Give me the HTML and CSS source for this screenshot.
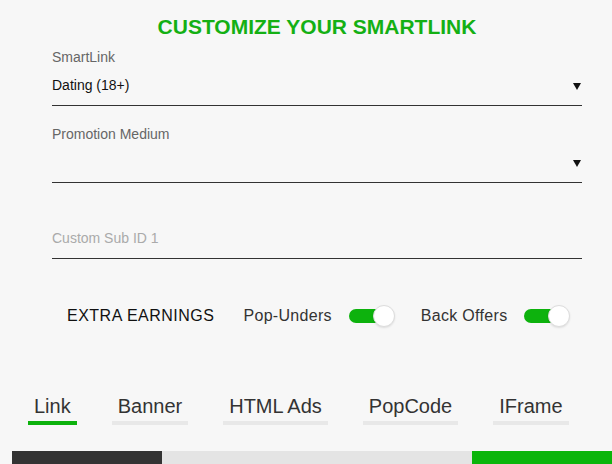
FILE: index.html
```html
<!DOCTYPE html>
<html lang="en">
<head>
	<title>Customize your SmartLink</title>
	<meta charset="utf-8">
	<meta name="viewport" content="initial-scale=1.0">
	<link rel="stylesheet" href="styles.css">
</head>
<body>

	<main class="smartlink">
		<h1 class="smartlink-title">CUSTOMIZE YOUR SMARTLINK</h1>

		<div class="field">
			<label class="field-label">SmartLink</label>
			<div class="select">
				<span class="select-value">Dating (18+)</span>
				<span class="select-arrow"></span>
			</div>
		</div>

		<div class="field">
			<label class="field-label">Promotion Medium</label>
			<div class="select">
				<span class="select-value"></span>
				<span class="select-arrow"></span>
			</div>
		</div>

		<div class="field field-sub">
			<input class="text-input" type="text" placeholder="Custom Sub ID 1">
		</div>

		<div class="extras">
			<span class="extras-title">EXTRA EARNINGS</span>
			<div class="extras-option">
				<span>Pop-Unders</span>
				<span class="toggle on"><span class="toggle-knob"></span></span>
			</div>
			<div class="extras-option">
				<span>Back Offers</span>
				<span class="toggle on"><span class="toggle-knob"></span></span>
			</div>
		</div>
	</main>

	<nav class="tabs">
		<a class="tab active">Link</a>
		<a class="tab">Banner</a>
		<a class="tab">HTML Ads</a>
		<a class="tab">PopCode</a>
		<a class="tab">IFrame</a>
	</nav>

	<div class="actions">
		<span class="action action-dark"></span>
		<span class="action action-light"></span>
		<span class="action action-green"></span>
	</div>

</body>
</html>
```

FILE: styles.css
```css
html, body {
	margin: 0;
	padding: 0;
	height: 100%;
	overflow: hidden;
	background: #f7f7f7;
	font-family: "Liberation Sans", Arial, sans-serif;
	color: #333;
}

* {
	box-sizing: border-box;
}

.smartlink {
	width: 530px;
	margin-left: 52px;
	padding-top: 15px;
}

.smartlink-title {
	margin: 0;
	font-size: 21px;
	line-height: 24px;
	font-weight: bold;
	text-align: center;
	color: #14b014;
}

.field {
	margin-top: 20px;
}

.field:first-of-type {
	margin-top: 10px;
}

.field-label {
	display: block;
	font-size: 14px;
	line-height: 16px;
	color: #666;
}

.select {
	display: flex;
	justify-content: space-between;
	align-items: center;
	height: 41px;
	padding: 10px 0;
	border-bottom: 1px solid #333;
	font-size: 14px;
	line-height: 20px;
	color: #111;
}

.select-arrow {
	width: 0;
	height: 0;
	margin: 3px 1px 0 0;
	border-left: 4px solid transparent;
	border-right: 4px solid transparent;
	border-top: 7px solid #111;
}

.field-sub {
	margin-top: 35px;
}

.text-input {
	display: block;
	width: 100%;
	height: 41px;
	padding: 10px 0;
	margin: 0;
	border: none;
	border-bottom: 1px solid #333;
	background: transparent;
	outline: none;
	font-family: inherit;
	font-size: 14px;
	line-height: 20px;
	color: #111;
}

.text-input::placeholder {
	color: #aaa;
}

.extras {
	display: flex;
	align-items: center;
	gap: 29px;
	margin-top: 46px;
	height: 22px;
	padding-left: 15px;
	font-size: 16px;
	line-height: 18px;
	letter-spacing: 0.3px;
}

.extras-title {
	color: #111;
	letter-spacing: 0.5px;
}

.extras-option {
	display: flex;
	align-items: center;
	gap: 17px;
}

.extras-option + .extras-option {
	margin-left: -3px;
}

.toggle {
	position: relative;
	display: block;
	width: 46px;
	height: 22px;
}

.toggle::before {
	content: '';
	position: absolute;
	left: 0;
	top: 4px;
	width: 40px;
	height: 14px;
	border-radius: 7px;
	background: #bbb;
}

.toggle.on::before {
	background: #0db20d;
}

.toggle-knob {
	position: absolute;
	top: 0;
	left: 0;
	width: 22px;
	height: 22px;
	border-radius: 50%;
	background: #fff;
	border: 1px solid #ddd;
	box-shadow: 0 1px 2px rgba(0,0,0,0.1);
}

.toggle.on .toggle-knob {
	left: 24px;
}

.tabs {
	display: flex;
	gap: 35px;
	margin: 67px 0 0 28px;
}

.tab {
	display: block;
	padding: 0 6px 3px;
	border-bottom: 4px solid #e8e8e8;
	font-size: 20px;
	line-height: 24px;
	color: #333;
	cursor: pointer;
}

.tab.active {
	border-bottom-color: #0db20d;
}

.actions {
	display: flex;
	margin: 26px 0 0 12px;
	height: 13px;
}

.action {
	display: block;
}

.action-dark {
	width: 150px;
	background: #333;
}

.action-light {
	width: 310px;
	background: #e4e4e4;
}

.action-green {
	flex: 1;
	background: #0bb50b;
}
```
